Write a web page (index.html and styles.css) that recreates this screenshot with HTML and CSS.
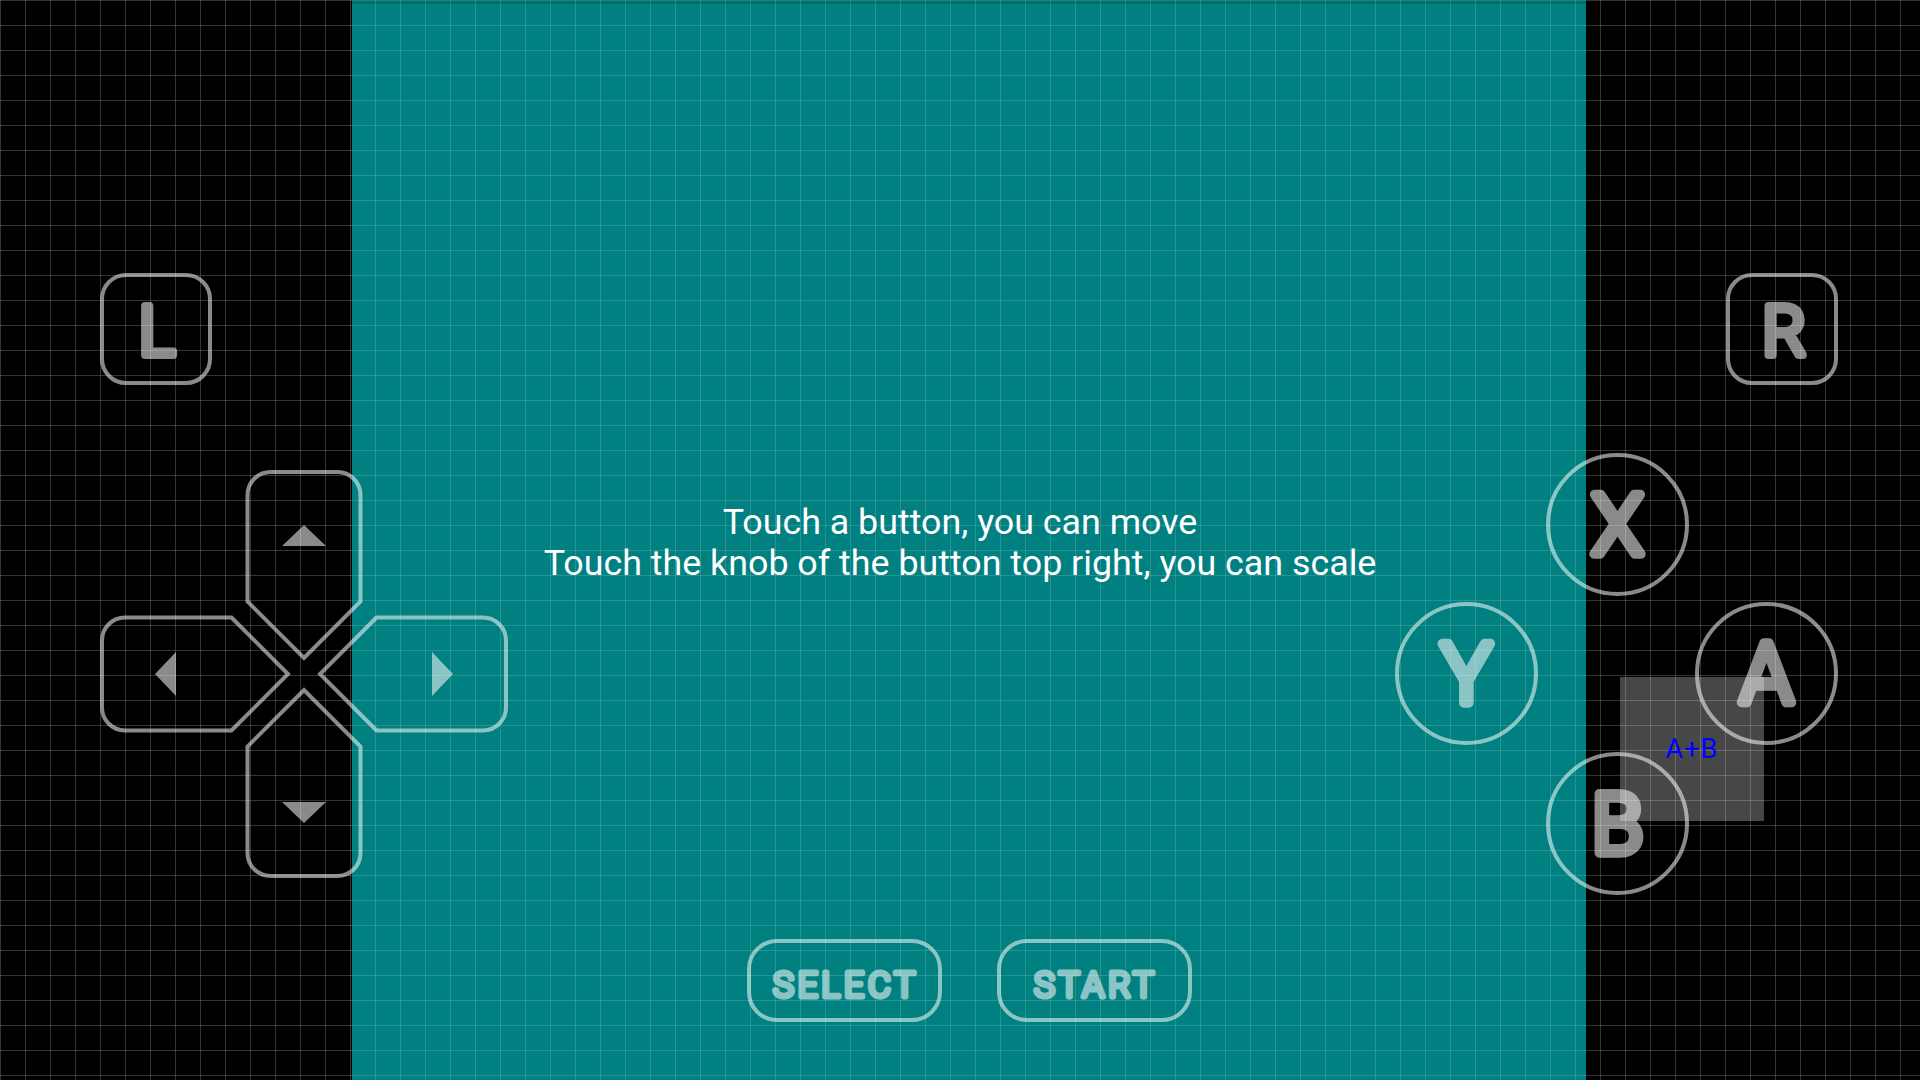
FILE: index.html
```html
<!DOCTYPE html>
<html lang="en">
<head>
<meta charset="utf-8">
<title>Gamepad layout editor</title>
<link rel="stylesheet" href="styles.css">
</head>
<body>
<div class="screen">
  <main class="stage">
    <p class="hint">Touch a button, you can move<br>Touch the knob of the button top right, you can scale</p>
  </main>

  <div class="combo">A+B</div>

  <div class="btn shoulder btn-l">
    <svg class="glyph" viewBox="0 0 104 104"><text x="53" y="78">L</text></svg>
  </div>
  <div class="btn shoulder btn-r">
    <svg class="glyph" viewBox="0 0 104 104"><text x="54" y="78">R</text></svg>
  </div>

  <svg class="dpad" viewBox="0 0 408 408">
    <g class="arm">
      <path d="M147.5 131.5 V25 A23 23 0 0 1 170.5 2 H237.5 A23 23 0 0 1 260.5 25 V131.5 L204 188 Z"/>
      <polygon points="204,55 226,76 182,76"/>
    </g>
    <g class="arm" transform="rotate(90 204 204)">
      <path d="M147.5 131.5 V25 A23 23 0 0 1 170.5 2 H237.5 A23 23 0 0 1 260.5 25 V131.5 L204 188 Z"/>
      <polygon points="204,55 226,76 182,76"/>
    </g>
    <g class="arm" transform="rotate(180 204 204)">
      <path d="M147.5 131.5 V25 A23 23 0 0 1 170.5 2 H237.5 A23 23 0 0 1 260.5 25 V131.5 L204 188 Z"/>
      <polygon points="204,55 226,76 182,76"/>
    </g>
    <g class="arm" transform="rotate(270 204 204)">
      <path d="M147.5 131.5 V25 A23 23 0 0 1 170.5 2 H237.5 A23 23 0 0 1 260.5 25 V131.5 L204 188 Z"/>
      <polygon points="204,55 226,76 182,76"/>
    </g>
  </svg>

  <div class="btn round btn-x">
    <svg class="glyph" viewBox="0 0 135 135"><text x="67.5" y="97">X</text></svg>
  </div>
  <div class="btn round btn-y">
    <svg class="glyph" viewBox="0 0 135 135"><text x="67.5" y="97">Y</text></svg>
  </div>
  <div class="btn round btn-a">
    <svg class="glyph" viewBox="0 0 135 135"><text x="67.5" y="97">A</text></svg>
  </div>
  <div class="btn round btn-b">
    <svg class="glyph" viewBox="0 0 135 135"><text x="67.5" y="97">B</text></svg>
  </div>

  <div class="btn pill btn-select">
    <svg class="glyph glyph-small" viewBox="0 0 187 75"><text x="95" y="54">SELECT</text></svg>
  </div>
  <div class="btn pill btn-start">
    <svg class="glyph glyph-small" viewBox="0 0 187 75"><text x="95" y="54">START</text></svg>
  </div>
</div>
</body>
</html>
```

FILE: styles.css
```css
html, body {
  margin: 0;
  padding: 0;
  width: 1920px;
  height: 1080px;
  overflow: hidden;
}

body {
  background-color: #000;
  background-image:
    linear-gradient(to right, rgba(255, 255, 255, 0.2) 1px, transparent 1px),
    linear-gradient(to bottom, rgba(255, 255, 255, 0.2) 1px, transparent 1px);
  background-size: 25px 25px;
  background-attachment: fixed;
  font-family: Roboto, "Noto Sans", sans-serif;
}

.screen {
  position: relative;
  width: 1920px;
  height: 1080px;
  display: flex;
}

.stage {
  margin-left: 352px;
  width: 1234px;
  height: 1080px;
  box-sizing: border-box;
  padding-right: 18px;
  padding-top: 5px;
  display: flex;
  align-items: center;
  justify-content: center;
  background-color: #008080;
  background-image:
    linear-gradient(to bottom, rgba(0, 0, 0, 0.12) 0, rgba(0, 0, 0, 0.12) 4px, transparent 4px),
    linear-gradient(to right, rgba(255, 255, 255, 0.15) 1px, transparent 1px),
    linear-gradient(to bottom, rgba(255, 255, 255, 0.15) 1px, transparent 1px);
  background-size: 100% 100%, 25px 25px, 25px 25px;
  background-repeat: no-repeat, repeat, repeat;
  background-attachment: scroll, fixed, fixed;
}

.hint {
  margin: 0;
  color: #fff;
  font-family: Roboto, "Noto Sans", sans-serif;
  font-size: 35.8px;
  line-height: 41px;
  text-align: center;
  white-space: nowrap;
}

/* ---------- overlay controls ---------- */

.btn {
  position: absolute;
  box-sizing: border-box;
  border: 4px solid rgba(255, 255, 255, 0.54);
  display: flex;
}

.glyph {
  display: block;
  width: 100%;
  height: 100%;
  opacity: 0.54;
  overflow: visible;
}

.glyph text {
  font-family: Roboto, "Noto Sans", sans-serif;
  font-weight: 300;
  fill: #fff;
  stroke: #fff;
  stroke-linejoin: round;
  stroke-linecap: round;
  text-anchor: middle;
}

.shoulder {
  width: 112px;
  height: 112px;
  border-radius: 26px;
  top: 273px;
}

.shoulder .glyph text {
  font-size: 68px;
  stroke-width: 8px;
}

.btn-l { left: 100px; }
.btn-r { left: 1726px; }

.round {
  width: 143px;
  height: 143px;
  border-radius: 50%;
}

.round .glyph text {
  font-size: 84px;
  stroke-width: 9.5px;
}

.btn-x { left: 1546px; top: 453px; }
.btn-y { left: 1395px; top: 602px; }
.btn-a { left: 1695px; top: 602px; }
.btn-b { left: 1546px; top: 752px; }

.pill {
  width: 195px;
  height: 83px;
  border-radius: 30px;
  top: 939px;
}

.glyph-small text {
  font-size: 35px;
  stroke-width: 5px;
  letter-spacing: 4px;
}

.btn-select { left: 747px; }
.btn-start { left: 997px; }

.dpad {
  position: absolute;
  left: 100px;
  top: 470px;
  width: 408px;
  height: 408px;
  opacity: 0.54;
  overflow: visible;
}

.dpad path {
  fill: none;
  stroke: #fff;
  stroke-width: 4px;
}

.dpad polygon {
  fill: #fff;
  stroke: none;
}

.combo {
  position: absolute;
  left: 1620px;
  top: 677px;
  width: 144px;
  height: 144px;
  background: rgba(255, 255, 255, 0.28);
  display: flex;
  align-items: center;
  justify-content: center;
  color: #0000ff;
  font-family: Roboto, "Noto Sans", sans-serif;
  font-size: 27px;
  letter-spacing: 1px;
  line-height: 1;
}
```
